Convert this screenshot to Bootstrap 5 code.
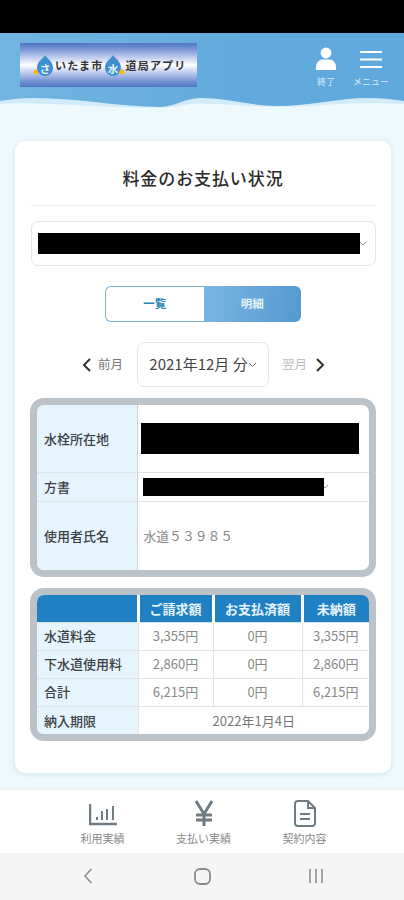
<!DOCTYPE html>
<html lang="ja">
<head>
  <meta charset="UTF-8">
  <title>料金のお支払い状況</title>
  <link href="https://cdn.jsdelivr.net/npm/bootstrap@5.3.3/dist/css/bootstrap.min.css" rel="stylesheet">
  <style>
    body {
      width: 404px;
      height: 900px;
      overflow: hidden;
      background: #eef9fd;
      font-family: "Noto Sans CJK JP", "Noto Sans", sans-serif;
      color: #333;
    }

    .status-strip { height: 33px; background: #000; }

    .app-head { background: linear-gradient(90deg, #72b5e2, #62aadd 60%, #5fa9dc); }
    .head-main { height: 61px; padding: 10px 15px 0 20px; }
    .head-wave { display: block; width: 404px; height: 14px; margin-bottom: -1px; }

    .logo-box {
      width: 177px;
      height: 44px;
      background: linear-gradient(180deg, #4f74c4 0%, #7f9cd8 16%, #c3cff0 34%, #ffffff 50%, #c3cff0 66%, #7f9cd8 84%, #4f74c4 100%);
      font-size: 11px;
      font-weight: 700;
      color: #333;
      letter-spacing: 1.2px;
      padding-left: 13px;
    }
    .logo-drop { height: 21px; margin-right: 2px; flex: none; }
    .logo-drop-a { width: 20px; }
    .logo-drop-b { width: 22px; margin-right: 0; }
    .logo-drop text { font-size: 10.500px; font-weight: 700; letter-spacing: 0; text-anchor: middle; fill: #eaf5fc; }

    .head-btn { color: #d9eefa; font-size: 9px; line-height: 12px; text-align: center; }
    .head-btn svg { display: block; margin: 4px auto 5px; }

    .main-panel {
      margin: 34px 13px 0 15px;
      height: 632px;
      padding: 24px 15px 0;
      background: #fff;
      border-radius: 10px;
      box-shadow: 0 1px 6px rgba(150, 190, 210, .35);
    }
    .panel-title {
      font-size: 17px;
      font-weight: 500;
      line-height: 26px;
      text-align: center;
      letter-spacing: .9px;
      color: #2a2a2a;
      padding-bottom: 14px;
      border-bottom: 1px solid #edf0f2;
      margin-bottom: 15px;
    }

    .pick-box {
      border: 1.5px solid #e3e7ea;
      border-radius: 7px;
      background: #fff;
    }
    .account-pick { height: 45px; padding: 0 6px; margin-left: 1px; }
    .blackout { background: #000; }
    .account-block { width: 322px; height: 21px; }
    .chev { flex: none; }

    .view-switch { width: 196px; height: 36px; margin: 20px auto; font-size: 11.5px; font-weight: 700; }
    .view-off {
      flex: 1;
      color: #2b86b8;
      background: #fff;
      border: 1px solid #7fb0d0;
      border-right: 0;
      border-radius: 6px 0 0 6px;
    }
    .view-on {
      flex: 1;
      color: #e4f2fb;
      background: linear-gradient(100deg, #79b6e3, #5699d0);
      border-radius: 0 6px 6px 0;
    }

    .month-row { height: 45px; margin-bottom: 11px; padding-left: 51px; font-size: 12.5px; color: #777; }
    .prev-month { margin-left: 6px; }
    .month-pick { width: 132px; height: 45px; margin: 0 13px 0 14px; font-size: 15px; color: #444; }
    .next-month { color: #bbb; }

    .info-frame {
      border: 7px solid #bcc3c8;
      border-radius: 14px;
      overflow: hidden;
      background: #fff;
      margin-bottom: 11px;
    }
    .info-frame table { width: 100%; border-collapse: collapse; table-layout: fixed; font-size: 13px; }
    .info-frame th, .info-frame td { padding: 0; vertical-align: middle; }
    .info-frame tr + tr > * { border-top: 1.5px solid #dfe4e7; }
    .row-label { background: #e6f5fd; color: #3b4044; font-weight: 500; padding-left: 7px !important; border-right: 1px solid #c6d2d9; }

    .addr-head { width: 100px; }
    .row-addr { height: 67px; }
    .row-town { height: 29px; }
    .row-user { height: 69px; }
    .addr-table .cell-pad { padding-left: 3px; padding-right: 8px; }
    .addr-block { height: 31px; width: 218px; }
    .town-block { height: 18px; width: 181px; margin-left: 2px; }
    .user-name { margin-left: 3px; font-size: 12.800px; color: #888; }

    .bill-col-a { width: 101px; }
    .bill-col-b { width: 75px; }
    .bill-col-c { width: 89px; }
    .bill-table th.bill-head {
      background: #1f81c4;
      color: #e8f4fb;
      height: 27px;
      font-size: 13px;
      font-weight: 700;
      text-align: center;
      border-left: 3px solid #fff;
    }
    .bill-table th.bill-head:first-child { border-left: 0; }
    .bill-table td { height: 28px; text-align: center; color: #888; border-left: 1.5px solid #dfe4e7; }
    .bill-table td.row-label { text-align: left; border-left: 0; border-right: 0; color: #3b4044; }
    .bill-table td.due-date { color: #777; }

    .bottom-tabs { margin-top: 16px; height: 64px; background: #fff; border-top: 1px solid #e9eff2; padding-left: 52px; }
    .tab-item { width: 101px; font-size: 11px; line-height: 13px; color: #888; text-align: center; padding-top: 10px; }
    .tab-item svg { display: block; margin: 0 auto 5px; height: 27px; }

    .system-nav { height: 47px; background: #f5f5f5; padding-bottom: 6px; }
    .system-nav > div { width: 114px; }
  </style>
</head>
<body>

<div class="status-strip"></div>

<!-- Header -->
<header class="app-head">
  <div class="head-main d-flex justify-content-between align-items-start">
    <div class="logo-box d-flex align-items-center">
      <svg class="logo-drop logo-drop-a" viewBox="0 0 20 21">
        <circle cx="3" cy="17" r="2.600" fill="#f3b81f"/>
        <path d="M12 0c2 4 8 6 8 13a8 8 0 0 1-16 0C4 6 10 4 12 0z" fill="#3f8fd0"/>
        <text x="12" y="17.500">さ</text>
      </svg>
      <span>いたま市</span>
      <svg class="logo-drop logo-drop-b" viewBox="0 0 22 21">
        <path d="M10 0l6 5-6 2z" fill="#ee9fd8"/>
        <path d="M10 0c2 4 8 6 8 13a8 8 0 0 1-16 0C2 6 8 4 10 0z" fill="#3f8fd0"/>
        <circle cx="19" cy="17" r="2.600" fill="#f3b81f"/>
        <text x="10" y="17.500">水</text>
      </svg>
      <span>道局アプリ</span>
    </div>
    <div class="d-flex gap-3">
      <div class="head-btn">
        <svg width="22" height="24" viewBox="0 0 22 24" fill="#fff">
          <circle cx="11" cy="6" r="5.400"/>
          <path d="M1 23c-1-7 3-10 6-10.500h8c3 .5 7 3.500 6 10.500z"/>
        </svg>
        終了
      </div>
      <div class="head-btn">
        <svg width="24" height="24" viewBox="0 0 24 24" fill="none" stroke="#fff" stroke-width="2">
          <path d="M1 5h22M1 12.500h22M1 20h22"/>
        </svg>
        メニュー
      </div>
    </div>
  </div>
  <svg class="head-wave" viewBox="0 0 404 14" preserveAspectRatio="none">
    <path d="M0 7C12 5 22 4 33 4C80 4 120 13 160 13C175 13 185 4 200 4C230 4 250 12 277 12C310 12 340 4 367 4C380 4 392 5 404 7V14H0z" fill="#d3ebf9"/>
    <path d="M0 10C12 9 22 9 33 9.500C80 11 120 14 160 14C175 14 185 9 200 9.500C230 10 250 13 277 13C310 13 340 9 367 9C380 9 392 9.500 404 10V14H0z" fill="#eef9fd"/>
  </svg>
</header>

<!-- Content -->
<main class="main-panel">
  <h1 class="panel-title">料金のお支払い状況</h1>

  <div class="pick-box account-pick d-flex align-items-center">
    <div class="blackout account-block"></div>
    <svg class="chev" width="7" height="6" viewBox="0 0 7 6" fill="none" stroke="#999" stroke-width="1"><path d="M0 1l3 3 3-3"/></svg>
  </div>

  <div class="view-switch d-flex">
    <div class="view-off d-flex align-items-center justify-content-center">一覧</div>
    <div class="view-on d-flex align-items-center justify-content-center">明細</div>
  </div>

  <div class="month-row d-flex align-items-center">
    <svg width="11" height="14" viewBox="0 0 11 14" fill="none" stroke="#333" stroke-width="2"><path d="M9 1L3 7l6 6"/></svg>
    <span class="prev-month">前月</span>
    <div class="pick-box month-pick d-flex align-items-center justify-content-center">
      <span>2021年12月 分</span>
      <svg class="chev" width="9" height="6" viewBox="0 0 9 6" fill="none" stroke="#666" stroke-width="1"><path d="M1 1l3.500 3.500L8 1"/></svg>
    </div>
    <span class="next-month">翌月</span>
    <svg class="ms-2" width="11" height="14" viewBox="0 0 11 14" fill="none" stroke="#333" stroke-width="2"><path d="M2 1l6 6-6 6"/></svg>
  </div>

  <div class="info-frame">
    <table class="addr-table">
      <colgroup><col class="addr-head"><col></colgroup>
      <tr class="row-addr">
        <td class="row-label">水栓所在地</td>
        <td class="cell-pad"><div class="blackout addr-block"></div></td>
      </tr>
      <tr class="row-town">
        <td class="row-label">方書</td>
        <td class="cell-pad">
          <div class="d-flex align-items-center">
            <div class="blackout town-block"></div>
            <svg class="chev" width="4" height="5" viewBox="0 0 4 5" fill="none" stroke="#999" stroke-width="1"><path d="M0 3l1 1 3-3"/></svg>
          </div>
        </td>
      </tr>
      <tr class="row-user">
        <td class="row-label">使用者氏名</td>
        <td class="cell-pad"><span class="user-name">水道５３９８５</span></td>
      </tr>
    </table>
  </div>

  <div class="info-frame">
    <table class="bill-table">
      <colgroup><col class="bill-col-a"><col class="bill-col-b"><col class="bill-col-c"><col></colgroup>
      <tr>
        <th class="bill-head"></th>
        <th class="bill-head">ご請求額</th>
        <th class="bill-head">お支払済額</th>
        <th class="bill-head">未納額</th>
      </tr>
      <tr>
        <td class="row-label">水道料金</td><td>3,355円</td><td>0円</td><td>3,355円</td>
      </tr>
      <tr>
        <td class="row-label">下水道使用料</td><td>2,860円</td><td>0円</td><td>2,860円</td>
      </tr>
      <tr>
        <td class="row-label">合計</td><td>6,215円</td><td>0円</td><td>6,215円</td>
      </tr>
      <tr>
        <td class="row-label">納入期限</td><td class="due-date" colspan="3">2022年1月4日</td>
      </tr>
    </table>
  </div>
</main>

<!-- Bottom tabs -->
<nav class="bottom-tabs d-flex">
  <div class="tab-item">
    <svg width="28" height="27" viewBox="0 0 28 27" fill="none" stroke="#6f7b82" stroke-width="2">
      <path d="M1 4v20h27" stroke-width="2.500"/>
      <path d="M8 17v3M13 11v9M18 9v11M24 6v14"/>
    </svg>
    利用実績
  </div>
  <div class="tab-item">
    <svg width="20" height="27" viewBox="0 0 20 27" fill="none" stroke="#6f7b82" stroke-width="3">
      <path d="M2 1l8 13 8-13M10 14v12M2 15h16M2 20h16"/>
    </svg>
    支払い実績
  </div>
  <div class="tab-item">
    <svg width="22" height="27" viewBox="0 0 22 27" fill="none" stroke="#6f7b82" stroke-width="2">
      <path d="M14 1H4a3 3 0 0 0-3 3v19a3 3 0 0 0 3 3h14a3 3 0 0 0 3-3V8z"/>
      <path d="M14 1v7h7M6 14h10M6 19h10"/>
    </svg>
    契約内容
  </div>
</nav>

<!-- Android nav -->
<div class="system-nav d-flex justify-content-center align-items-center">
  <div class="text-center">
    <svg width="10" height="16" viewBox="0 0 10 16" fill="none" stroke="#8a8a8a" stroke-width="1.500"><path d="M8.500 1L2 8l6.500 7"/></svg>
  </div>
  <div class="text-center">
    <svg width="17" height="17" viewBox="0 0 17 17" fill="none" stroke="#8a8a8a" stroke-width="1.800"><rect x="1" y="1" width="15" height="15" rx="5"/></svg>
  </div>
  <div class="text-center">
    <svg width="16" height="16" viewBox="0 0 16 16" fill="none" stroke="#8a8a8a" stroke-width="1.500"><path d="M2 1v14M8 1v14M14 1v14"/></svg>
  </div>
</div>

<script src="https://cdn.jsdelivr.net/npm/bootstrap@5.3.3/dist/js/bootstrap.bundle.min.js"></script>
</body>
</html>
